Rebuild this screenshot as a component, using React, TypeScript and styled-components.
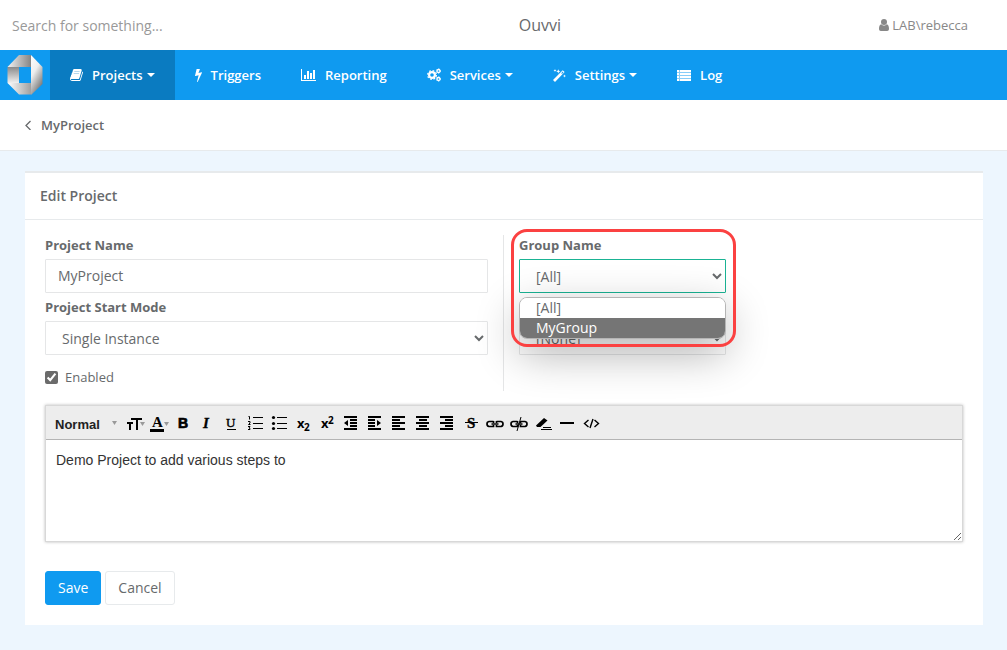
import React from 'react';
import styled, { createGlobalStyle, css } from 'styled-components';

const c = {
  blue: '#0f9af0',
  blueDark: '#0a7bc1',
  text: '#676a6c',
  muted: '#888888',
  line: '#e7eaec',
  field: '#e5e6e7',
  page: '#edf6fe',
};

const Global = createGlobalStyle`
  *, *::before, *::after { box-sizing: border-box; }
  body {
    margin: 0;
    background: ${c.page};
    color: ${c.text};
    font-family: "Open Sans", "Noto Sans", sans-serif;
    font-size: 13px;
    line-height: 20px;
  }
  button, input, select, textarea { font: inherit; color: inherit; }
`;

/* ---------- top bar ---------- */
const TopBar = styled.header`
  display: grid;
  grid-template-columns: 1fr auto 1fr;
  align-items: center;
  height: 50px;
  padding: 0 39px 0 12px;
  background: #fff;
`;
const Search = styled.input`
  width: 200px;
  padding: 2px 0 0;
  border: 0;
  outline: 0;
  background: transparent;
  font-size: 14px;
  &::placeholder { color: #999; opacity: 1; }
`;
const AppName = styled.span`
  padding-left: 100px;
  font-size: 16px;
`;
const User = styled.a`
  display: flex;
  align-items: center;
  justify-self: end;
  gap: 3px;
  color: ${c.muted};
  text-decoration: none;
`;

/* ---------- navigation ---------- */
const Nav = styled.nav`
  display: flex;
  height: 50px;
  background: ${c.blue};
`;
const Brand = styled.a`
  display: flex;
  align-items: center;
  width: 50px;
  padding-left: 7px;
`;
const NavLink = styled.a<{ $active?: boolean }>`
  display: flex;
  align-items: center;
  padding: 0 20px;
  color: #fff;
  font-weight: 600;
  text-decoration: none;
  background: ${(p) => (p.$active ? c.blueDark : 'transparent')};
  svg { flex: none; margin-right: 9px; }
`;
const Caret = styled.span`
  width: 0;
  margin-left: 4px;
  border: 4px solid transparent;
  border-top-color: #fff;
  border-bottom: 0;
`;

/* ---------- breadcrumb and panel ---------- */
const Crumbs = styled.div`
  display: flex;
  align-items: center;
  height: 51px;
  padding: 0 25px;
  background: #fff;
  border-bottom: 1px solid ${c.line};
`;
const CrumbLink = styled.a`
  display: flex;
  align-items: center;
  gap: 9px;
  color: inherit;
  font-weight: 600;
  text-decoration: none;
`;
const Main = styled.main`
  padding: 20px 24px 25px 25px;
`;
const Panel = styled.section`
  background: #fff;
  border-top: 2px solid ${c.line};
`;
const PanelTitle = styled.h1`
  margin: 0;
  padding: 13px 15px;
  border-bottom: 1px solid ${c.line};
  font-size: 14px;
  font-weight: 600;
  line-height: 20px;
`;
const Form = styled.form`
  padding: 15px 20px 20px;
`;
const Columns = styled.div`
  display: grid;
  grid-template-columns: 1fr 1fr;
`;
const Column = styled.div<{ $divided?: boolean }>`
  ${(p) =>
    p.$divided
      ? css`
          padding-right: 15px;
          border-right: 1px solid ${c.field};
        `
      : css`
          padding-left: 15px;
        `}
`;
const Field = styled.div<{ $narrow?: boolean; $unlabelled?: boolean }>`
  position: relative;
  margin-bottom: 4px;
  padding-top: ${(p) => (p.$unlabelled ? 24 : 0)}px;
  max-width: ${(p) => (p.$narrow ? '207px' : 'none')};
`;
const Label = styled.label`
  display: block;
  margin-bottom: 4px;
  font-weight: 700;
`;
const control = css`
  display: block;
  width: 100%;
  height: 34px;
  padding: 6px 12px;
  border: 1px solid ${c.field};
  border-radius: 1px;
  outline: 0;
  background: #fff;
  font-size: 14px;
`;
const TextInput = styled.input`
  ${control}
  padding: 5px 12px 7px;
`;
const Select = styled.select<{ $focused?: boolean }>`
  ${control}
  ${(p) => p.$focused && 'border-color: #1ab394;'}
`;
const Check = styled.label`
  display: flex;
  align-items: center;
  gap: 7px;
  margin-top: 12px;
  padding-bottom: 4px;
  input {
    width: 13px;
    height: 13px;
    margin: 0;
    accent-color: #6b6b6b;
  }
`;
const Options = styled.ul`
  position: absolute;
  top: 62px;
  left: 0;
  z-index: 2;
  width: 100%;
  margin: 0;
  padding: 0;
  overflow: hidden;
  list-style: none;
  background: #fff;
  border: 1px solid #b5b5b5;
  border-radius: 8px;
  box-shadow: 0 14px 44px rgba(0, 0, 0, 0.32);
  font-size: 14px;
`;
const Option = styled.li<{ $active?: boolean }>`
  padding: 0 16px;
  color: ${(p) => (p.$active ? '#fff' : c.text)};
  background: ${(p) => (p.$active ? '#757575' : '#fff')};
`;
const Highlight = styled.div`
  position: absolute;
  top: -6px;
  left: -8px;
  right: -10px;
  z-index: 3;
  height: 118px;
  border: 3px solid #fb4141;
  border-radius: 16px;
  pointer-events: none;
`;

/* ---------- rich text editor ---------- */
const Editor = styled.div`
  margin: 14px 0 29px;
  border: 1px solid #d8d8d8;
  box-shadow: 0 0 3px #bbb;
`;
const Toolbar = styled.div`
  display: flex;
  align-items: center;
  height: 34px;
  padding: 0 9px;
  background: #ededed;
  border-bottom: 1px solid #b4b4b4;
`;
const StyleSelect = styled.div`
  display: flex;
  align-items: center;
  width: 68px;
  select {
    appearance: none;
    width: 57px;
    padding: 4px 0 0;
    border: 0;
    outline: 0;
    background: transparent;
    color: #222;
    font-family: "Liberation Sans", Arial, sans-serif;
    font-size: 13px;
    font-weight: 700;
  }
`;
const ToolButton = styled.button`
  display: block;
  width: 24px;
  height: 24px;
  padding: 0;
  border: 0;
  background: transparent;
  svg { display: block; }
`;
const Area = styled.textarea`
  display: block;
  width: 100%;
  height: 101px;
  padding: 10px;
  border: 0;
  outline: 0;
  resize: vertical;
  background: #fff;
  color: #333;
  font-family: "Liberation Sans", Arial, sans-serif;
  font-size: 14px;
  line-height: 20px;
`;

const Actions = styled.div`
  display: flex;
  gap: 4px;
`;
const Button = styled.button<{ $primary?: boolean }>`
  height: 34px;
  padding: 0 12px;
  border: 1px solid ${(p) => (p.$primary ? c.blue : c.line)};
  border-radius: 3px;
  background: ${(p) => (p.$primary ? c.blue : '#fff')};
  color: ${(p) => (p.$primary ? '#fff' : c.text)};
  font-size: 14px;
`;

/* ---------- drawings ---------- */
const Logo = () => (
  <svg width="36" height="42" viewBox="0 0 36 42" aria-hidden="true">
    <defs>
      <linearGradient id="lt" x1="0" x2="1"><stop offset="0" stopColor="#f2f2f2" /><stop offset="1" stopColor="#858585" /></linearGradient>
      <linearGradient id="lr" x1="0" y1="0" x2="0.5" y2="1"><stop offset="0" stopColor="#fff" /><stop offset=".45" stopColor="#eee" /><stop offset="1" stopColor="#777" /></linearGradient>
      <linearGradient id="lb" x1="0" x2="1"><stop offset="0" stopColor="#fff" /><stop offset="1" stopColor="#a0a0a0" /></linearGradient>
      <linearGradient id="ll" x1="0" y1="0" x2="0" y2="1"><stop offset="0" stopColor="#8a8a8a" /><stop offset="1" stopColor="#f0f0f0" /></linearGradient>
    </defs>
    <path d="M12 1h12v12H.5z" fill="url(#lt)" />
    <path d="M24 1l11.500 12v17L24 41z" fill="url(#lr)" />
    <path d="M.5 29H24v11.500H12z" fill="url(#lb)" />
    <path d="M.5 13H12v16H.5z" fill="url(#ll)" />
  </svg>
);
const BookIcon = () => (
  <svg width="13" height="14" viewBox="0 0 1664 1792" fill="currentColor" aria-hidden="true">
    <path d="M1639 478q40 57 18 129l-275 906q-19 64-76.5 107.5t-122.5 43.5h-923q-77 0-148.5-53.5t-99.5-131.5q-24-67-2-127 0-4 3-27t4-37q1-8-3-21.5t-3-19.5q2-11 8-21t16.5-23.5 16.5-23.5q23-38 45-91.5t30-91.5q3-10 .5-30t-.5-28q3-11 17-28t17-23q21-36 42-92t25-90q1-9-2.5-32t.5-28q4-13 22-30.5t22-22.5q19-26 42.5-84.5t27.5-96.5q1-8-3-25.5t-2-26.5q2-8 9-18t18-23 17-21q8-12 16.5-30.5t15-35 16-36 19.5-32 26.5-23.5 36-11.5 47.5 5.5l-1 3q38-9 51-9h761q74 0 114 56t18 130l-274 906q-36 119-71.5 153.5t-128.5 34.5h-869q-27 0-38 15-11 16-1 43 24 70 144 70h923q29 0 56-15.5t35-41.500l300-987q7-22 5-57 38 15 59 43z" />
    <path d="M560 448h690l-22 64H540zM480 704h690l-22 64H460z" fill={c.blueDark} opacity=".6" />
  </svg>
);
const BoltIcon = () => (
  <svg width="7" height="14" viewBox="0 0 896 1792" fill="currentColor" aria-hidden="true">
    <path d="M885 566q18 20 7 44l-540 1157q-13 25-42 25-4 0-14-2-17-5-25.5-19t-4.5-30l197-808-406 101q-4 1-12 1-18 0-31-11-18-15-13-39l201-825q4-14 16-23t28-9h328q19 0 32 12.5t13 29.5q0 8-5 18l-171 463 396-98q8-2 12-2 19 0 34 15z" />
  </svg>
);
const ChartIcon = () => (
  <svg width="15" height="12" viewBox="0 0 15 12" fill="currentColor" aria-hidden="true">
    <path d="M0 0h1v11h14v1H0zM3 6h2v4H3zM6 2h2v8H6zM9 4h2v6H9zM12 1h2v9h-2z" />
  </svg>
);
const CogsIcon = () => (
  <svg width="14" height="14" viewBox="0 0 14 14" fill="none" stroke="currentColor" aria-hidden="true">
    <circle cx="5" cy="7" r="2.900" strokeWidth="2.200" />
    <circle cx="5" cy="7" r="4.400" strokeWidth="1.200" strokeDasharray="1.730 1.730" />
    <circle cx="11.500" cy="3" r="1.500" strokeWidth="1.300" />
    <circle cx="11.500" cy="3" r="2.200" strokeWidth=".8" strokeDasharray="1.150 1.150" />
    <circle cx="11.500" cy="11" r="1.500" strokeWidth="1.300" />
    <circle cx="11.500" cy="11" r="2.200" strokeWidth=".8" strokeDasharray="1.150 1.150" />
  </svg>
);
const WandIcon = () => (
  <svg width="13" height="13" viewBox="0 0 13 13" fill="currentColor" aria-hidden="true">
    <path fillRule="evenodd" d="M0 11L9.700 1.200l1.900 1.900L2 12.900zM8.300 4.200l.7.7 1.400-1.700-.7-.6z" />
    <path d="M2 0l.4 1.100 1.100.4-1.100.4L2 3l-.4-1.100L.5 1.500l1.100-.4zM5.300.2l.6 1.500 1.500.6-1.500.6-.6 1.500-.6-1.500-1.500-.6 1.500-.6zM11.500 5.500l.4 1.100 1.100.4-1.100.4-.4 1.100-.4-1.100L10 7l1.100-.4z" />
  </svg>
);
const ListIcon = () => (
  <svg width="14" height="11" viewBox="0 0 14 11" fill="currentColor" aria-hidden="true">
    <path d="M0 0h14v11H0z" opacity=".5" />
    <path d="M0 0h2v2H0zM3 0h11v2H3zM0 3h2v2H0zM3 3h11v2H3zM0 6h2v2H0zM3 6h11v2H3zM0 9h2v2H0zM3 9h11v2H3z" />
  </svg>
);
const UserIcon = () => (
  <svg width="10" height="12" viewBox="0 0 10 12" fill="currentColor" aria-hidden="true">
    <circle cx="5" cy="3" r="3" />
    <path d="M2.3 5.2C.6 5.5 0 7.500 0 9.800 0 11.200.8 12 1.800 12h6.400c1 0 1.800-.8 1.800-2.200 0-2.300-.6-4.300-2.300-4.600C7 6 6 6.500 5 6.500S3 6 2.300 5.200z" />
  </svg>
);
const BackIcon = () => (
  <svg width="7" height="10" viewBox="0 0 7 10" fill="none" stroke="currentColor" strokeWidth="1.300" aria-hidden="true">
    <path d="M5.500 1l-4.500 4.500 4.500 4.500" />
  </svg>
);

const Down = () => <path d="M17 11h5l-2.500 4z" fill="#999" />;
const sans = '"Liberation Sans", Arial, sans-serif';
const open = '"Open Sans", sans-serif';
const serif = '"Liberation Serif", "Times New Roman", serif';
const link = 'M10.500 10.500H6a2.500 2.500 0 0 0-2 2.500 2.500 2.500 0 0 0 2 2.500h4.500v-1.500M13.500 10.500H18a2.500 2.500 0 0 1 2 2.500 2.500 2.500 0 0 1-2 2.500h-4.500v-1.500M10.500 10v2M13.500 10v2M8.500 13h7';

const tools: { name: string; icon: React.ReactNode }[] = [
  { name: 'Font size', icon: <><path d="M4 11h6v2H8v6H6v-6H4zM8 7h11v2h-4v10h-2V9H8z" /><Down /></> },
  { name: 'Text colour', icon: <><text x="5" y="16" fontFamily={serif} fontSize="15" fontWeight="700">A</text><path d="M3 18h14v3H3z" /><Down /></> },
  { name: 'Bold', icon: <text x="7" y="17" fontFamily={sans} fontSize="14" fontWeight="700" stroke="#000" strokeWidth=".7">B</text> },
  { name: 'Italic', icon: <text x="8" y="17" fontFamily={serif} fontSize="15" fontWeight="700" fontStyle="italic" stroke="#000" strokeWidth=".3">I</text> },
  { name: 'Underline', icon: <><text x="7" y="16" fontFamily={serif} fontSize="13" stroke="#000" strokeWidth=".4">U</text><path d="M8 18h9v1H8z" /></> },
  {
    name: 'Numbered list',
    icon: (
      <>
        <path d="M10 6h10v1H10zM10 12h10v1H10zM10 17h10v1H10z" />
        <path d="M5.500 5.500h1v3M5 10.500h2v1.500L5.500 13.500h2M5 15.500h2l-1 1.500 1 .5v1H5" fill="none" stroke="#000" />
      </>
    ),
  },
  {
    name: 'Bullet list',
    icon: (
      <>
        <path d="M10 6h10v1H10zM10 12h10v1H10zM10 17h10v1H10z" />
        <circle cx="6.500" cy="6.500" r="1.600" /><circle cx="6.500" cy="12.500" r="1.600" /><circle cx="6.500" cy="17.500" r="1.600" />
      </>
    ),
  },
  { name: 'Subscript', icon: <><text x="6" y="17" fontFamily={open} fontSize="13" fontWeight="700">x</text><text x="13" y="20" fontFamily={open} fontSize="10" fontWeight="700">2</text></> },
  { name: 'Superscript', icon: <><text x="6" y="17" fontFamily={open} fontSize="13" fontWeight="700">x</text><text x="13" y="13" fontFamily={open} fontSize="10" fontWeight="700">2</text></> },
  { name: 'Outdent', icon: <path d="M5 5h13v2H5zM11 8h7v2h-7zM11 11h7v2h-7zM11 14h7v2h-7zM5 17h13v2H5zM9 9v6l-4-3z" /> },
  { name: 'Indent', icon: <path d="M5 5h13v2H5zM5 8h7v2H5zM5 11h7v2H5zM5 14h7v2H5zM5 17h13v2H5zM14 9v6l4-3z" /> },
  { name: 'Align left', icon: <path d="M5 5h13v2H5zM5 8h8v2H5zM5 11h13v2H5zM5 14h8v2H5zM5 17h13v2H5z" /> },
  { name: 'Align centre', icon: <path d="M5 5h13v2H5zM8 8h8v2H8zM5 11h13v2H5zM8 14h8v2H8zM5 17h13v2H5z" /> },
  { name: 'Align right', icon: <path d="M5 5h13v2H5zM10 8h8v2h-8zM5 11h13v2H5zM10 14h8v2h-8zM5 17h13v2H5z" /> },
  { name: 'Strikethrough', icon: <><text x="8" y="17" fontFamily={serif} fontSize="15" fontWeight="700" stroke="#000" strokeWidth=".3">S</text><path d="M6 11h13v1H6z" /></> },
  { name: 'Insert link', icon: <path d={link} fill="none" stroke="#000" strokeWidth="1.700" /> },
  { name: 'Remove link', icon: <><path d={link} fill="none" stroke="#000" strokeWidth="1.700" /><path d="M14 6l-4 14" stroke="#000" /></> },
  { name: 'Clear formatting', icon: <><path d="M5 14.500L13 7l3.500 2.500-7 6.500H6z" /><path d="M12 16h8v1h-8zM10 18h11v1H10z" /></> },
  { name: 'Horizontal line', icon: <path d="M5 11h14v2H5z" /> },
  { name: 'View source', icon: <path d="M9.500 9L5.500 12.500l4 3.500M15.500 9l4 3.500-4 3.500M14 8l-3 9" fill="none" stroke="#000" strokeWidth="1.400" /> },
];

export default function App() {
  return (
    <>
      <Global />
      <TopBar>
        <Search type="search" placeholder="Search for something..." aria-label="Search" />
        <AppName>Ouvvi</AppName>
        <User href="#user"><UserIcon />LAB\rebecca</User>
      </TopBar>
      <Nav>
        <Brand href="#home" aria-label="Home"><Logo /></Brand>
        <NavLink href="#projects" $active><BookIcon />Projects<Caret /></NavLink>
        <NavLink href="#triggers"><BoltIcon />Triggers</NavLink>
        <NavLink href="#reporting"><ChartIcon />Reporting</NavLink>
        <NavLink href="#services"><CogsIcon />Services<Caret /></NavLink>
        <NavLink href="#settings"><WandIcon />Settings<Caret /></NavLink>
        <NavLink href="#log"><ListIcon />Log</NavLink>
      </Nav>
      <Crumbs>
        <CrumbLink href="#project"><BackIcon />MyProject</CrumbLink>
      </Crumbs>
      <Main>
        <Panel>
          <PanelTitle>Edit Project</PanelTitle>
          <Form onSubmit={(e) => e.preventDefault()}>
            <Columns>
              <Column $divided>
                <Field>
                  <Label htmlFor="name">Project Name</Label>
                  <TextInput id="name" defaultValue="MyProject" />
                </Field>
                <Field>
                  <Label htmlFor="mode">Project Start Mode</Label>
                  <Select id="mode"><option>Single Instance</option></Select>
                </Field>
                <Check><input type="checkbox" defaultChecked />Enabled</Check>
              </Column>
              <Column>
                <Field $narrow>
                  <Label htmlFor="group">Group Name</Label>
                  <Select id="group" $focused><option>[All]</option><option>MyGroup</option></Select>
                  <Options role="listbox" aria-label="Group Name">
                    <Option role="option">[All]</Option>
                    <Option role="option" aria-selected $active>MyGroup</Option>
                  </Options>
                  <Highlight />
                </Field>
                <Field $narrow $unlabelled>
                  <Select aria-label="Secondary group"><option>[None]</option></Select>
                </Field>
              </Column>
            </Columns>
            <Editor>
              <Toolbar role="toolbar" aria-label="Formatting">
                <StyleSelect>
                  <select aria-label="Paragraph style"><option>Normal</option></select>
                  <svg width="5" height="4" viewBox="0 0 5 4" aria-hidden="true"><path d="M0 0h5L2.500 4z" fill="#999" /></svg>
                </StyleSelect>
                {tools.map((t) => (
                  <ToolButton key={t.name} type="button" aria-label={t.name}>
                    <svg width="24" height="24" viewBox="0 0 24 24" aria-hidden="true">{t.icon}</svg>
                  </ToolButton>
                ))}
              </Toolbar>
              <Area aria-label="Description" defaultValue="Demo Project to add various steps to" />
            </Editor>
            <Actions>
              <Button type="submit" $primary>Save</Button>
              <Button type="button">Cancel</Button>
            </Actions>
          </Form>
        </Panel>
      </Main>
    </>
  );
}
